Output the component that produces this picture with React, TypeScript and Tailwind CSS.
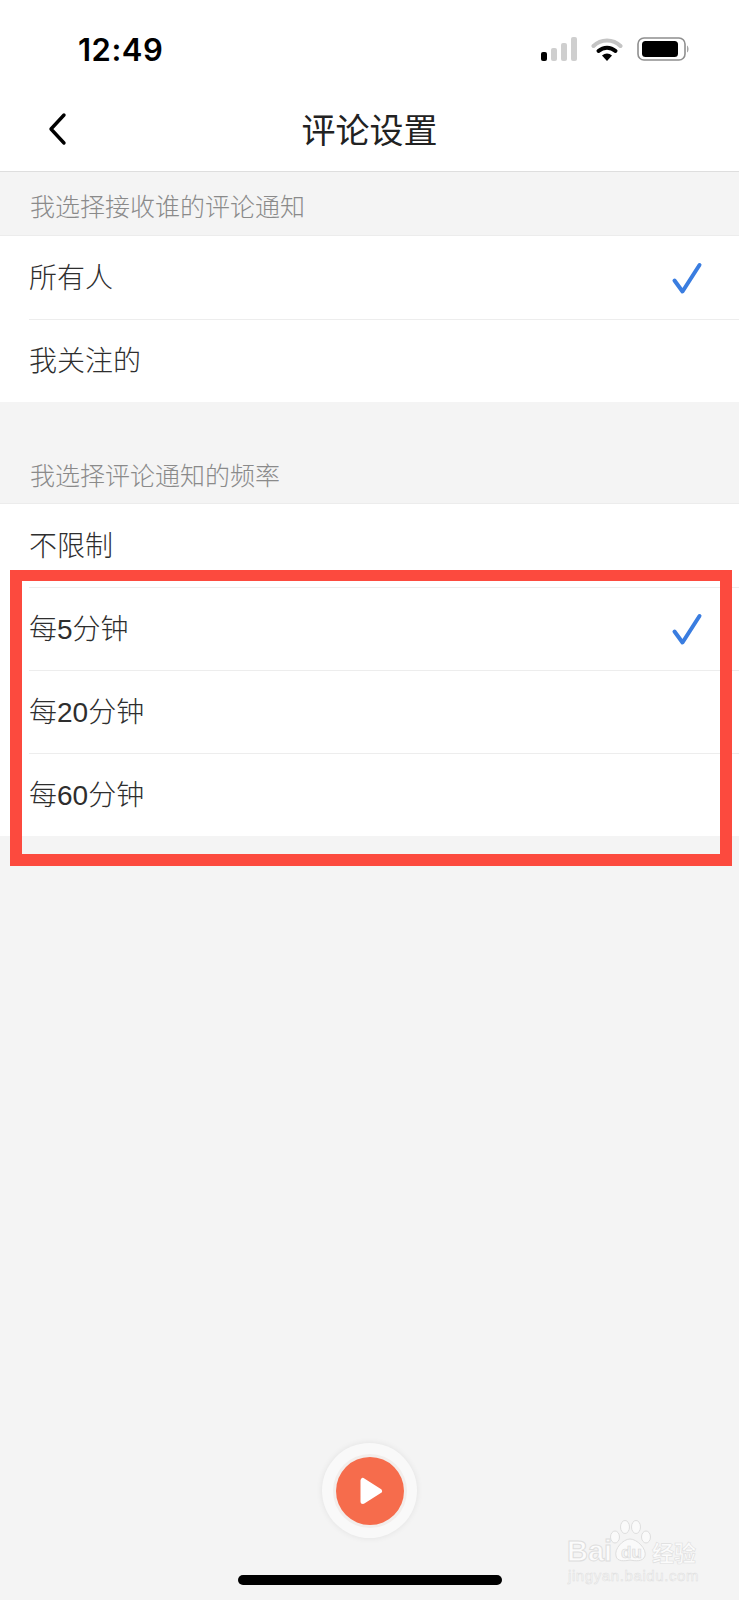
import React from "react";

function Check() {
  return (
    <svg width="32" height="34" viewBox="0 0 32 34" fill="none">
      <path d="M3.5 19.5 L11.5 30.5 L28.5 4" stroke="#3a7de0" strokeWidth="4" strokeLinecap="round" strokeLinejoin="round" />
    </svg>
  );
}

function Row({ label, checked, first }: { label: string; checked?: boolean; first?: boolean }) {
  return (
    <div className="h-[83px] pl-[29px] flex">
      <div className={`flex-1 flex items-center justify-between pr-[36px] ${first ? "" : "border-t border-[#ededed]"}`}>
        <span className="text-[28px] leading-none text-[#2e2e2e] font-['Liberation_Sans','Noto_Sans_CJK_SC',sans-serif] font-light mt-[2px]">{label}</span>
        {checked ? <Check /> : null}
      </div>
    </div>
  );
}

function Label({ text, className }: { text: string; className: string }) {
  return (
    <div className={`flex items-center pl-[30px] text-[25px] leading-none text-[#8a8a8a] font-['Noto_Sans_CJK_SC',sans-serif] font-light ${className}`}>
      {text}
    </div>
  );
}

function StatusIcons() {
  return (
    <div className="flex items-center gap-[14px]">
      <svg width="36" height="24" viewBox="0 0 36 24">
        <rect x="0" y="15" width="6" height="9" rx="2" fill="#000" />
        <rect x="10" y="11" width="6" height="13" rx="2" fill="#cfcfcf" />
        <rect x="20" y="6" width="6" height="18" rx="2" fill="#cfcfcf" />
        <rect x="30" y="0" width="6" height="24" rx="2" fill="#cfcfcf" />
      </svg>
      <svg width="32" height="24" viewBox="0 0 32 24" fill="none">
        <path d="M2.5 9 C10 1.5 22 1.5 29.5 9" stroke="#c4c4c4" strokeWidth="4" strokeLinecap="round" />
        <path d="M7.5 14 C12.5 9.5 19.5 9.5 24.5 14" stroke="#000" strokeWidth="4" strokeLinecap="round" />
        <path d="M11 18.5 L16 24 L21 18.5 C18 15.8 14 15.8 11 18.5 Z" fill="#000" />
      </svg>
      <svg width="52" height="24" viewBox="0 0 52 24" fill="none">
        <rect x="1" y="1" width="47" height="22" rx="6" stroke="#8f8f8f" strokeWidth="1.6" />
        <rect x="5" y="4" width="36" height="16" rx="3.5" fill="#000" />
        <path d="M50 8.5 C52 9.5 52 14.5 50 15.5 Z" fill="#a5a5a5" />
      </svg>
    </div>
  );
}

function Watermark() {
  return (
    <div className="absolute left-[566px] top-[1518px] w-[134px] h-[68px] text-white">
      <svg className="absolute left-[44px] top-[1px]" width="42" height="43" viewBox="0 0 42 43" fill="#fafafa" stroke="#dedede" strokeWidth="1">
        <ellipse cx="5" cy="18" rx="4.5" ry="6" />
        <ellipse cx="15" cy="8" rx="4.5" ry="6.5" />
        <ellipse cx="26" cy="8" rx="4.5" ry="6.5" />
        <ellipse cx="36" cy="18" rx="4.5" ry="6" />
        <path d="M20 20 C27 20 37 30 35 37 C33 43 25 42 20 41 C15 42 7 43 6 37 C4 30 13 20 20 20 Z" />
      </svg>
      <div className="absolute left-[1px] top-[17px] text-[29px] leading-[32px] font-bold font-['Liberation_Sans',sans-serif] text-[#fbfbfb] [-webkit-text-stroke:1px_#dedede]">
        Bai
      </div>
      <div className="absolute left-[55px] top-[26px] text-[17px] leading-[18px] font-bold font-['Liberation_Sans',sans-serif] text-[#f4f4f4] [-webkit-text-stroke:0.6px_#d8d8d8]">
        du
      </div>
      <div className="absolute left-[86px] top-[21px] text-[22px] leading-[24px] font-bold font-['Noto_Sans_CJK_SC',sans-serif] text-[#fbfbfb] [-webkit-text-stroke:0.6px_#dedede]">
        经验
      </div>
      <div className="absolute left-[2px] top-[50px] text-[15px] leading-[16px] font-['Liberation_Sans',sans-serif] text-[#f8f8f8] [-webkit-text-stroke:0.5px_#dedede] whitespace-nowrap tracking-[0.6px]">
        jingyan.baidu.com
      </div>
    </div>
  );
}

export default function App() {
  return (
    <div className="relative w-[739px] h-[1600px] overflow-hidden bg-[#f4f4f4]">
      <div className="bg-white h-[172px] flex flex-col border-b border-[#dedede]">
        <div className="h-[90px] flex items-center justify-between pl-[78px] pr-[50px] pt-[8px]">
          <span className="text-[31px] leading-none font-semibold text-black font-['Inter',sans-serif] tracking-[0.5px]">12:49</span>
          <StatusIcons />
        </div>
        <div className="relative flex-1 flex items-center justify-center pb-[4px]">
          <svg className="absolute left-[46px] top-[21px]" width="22" height="36" viewBox="0 0 22 36" fill="none">
            <path d="M18 4 L5 18 L18 32" stroke="#000" strokeWidth="3.4" strokeLinecap="round" strokeLinejoin="round" />
          </svg>
          <span className="text-[34px] leading-none text-[#222222] font-['Noto_Sans_CJK_SC',sans-serif] font-normal">评论设置</span>
        </div>
      </div>

      <Label text="我选择接收谁的评论通知" className="h-[63px] pt-[4px]" />
      <div className="bg-white border-t border-[#ececec]">
        <Row label="所有人" checked first />
        <Row label="我关注的" />
      </div>

      <Label text="我选择评论通知的频率" className="h-[101px] pt-[43px]" />
      <div className="bg-white border-t border-[#ececec]">
        <Row label="不限制" first />
        <Row label="每5分钟" checked />
        <Row label="每20分钟" />
        <Row label="每60分钟" />
      </div>

      <div className="absolute left-[10px] top-[570px] w-[722px] h-[296px] border-x-[12px] border-t-[11px] border-b-[12px] border-[#fc4a3e]" />

      <div className="absolute left-[322px] top-[1443px] w-[95px] h-[95px] rounded-full bg-[#f9f9f9] shadow-[0_0_6px_rgba(0,0,0,0.08)] flex items-center justify-center">
        <div className="w-[68px] h-[68px] rounded-full bg-[#f66c4c] shadow-[0_0_0_3px_#f2eeec] flex items-center justify-center">
          <svg width="24" height="28" viewBox="0 0 24 28" className="ml-[3px]">
            <path d="M4 3.5 L4 24.5 L20.5 14 Z" fill="#fff" stroke="#fff" strokeWidth="5" strokeLinejoin="round" />
          </svg>
        </div>
      </div>

      <Watermark />

      <div className="absolute left-[238px] top-[1575px] w-[264px] h-[10px] rounded-full bg-black" />
    </div>
  );
}
